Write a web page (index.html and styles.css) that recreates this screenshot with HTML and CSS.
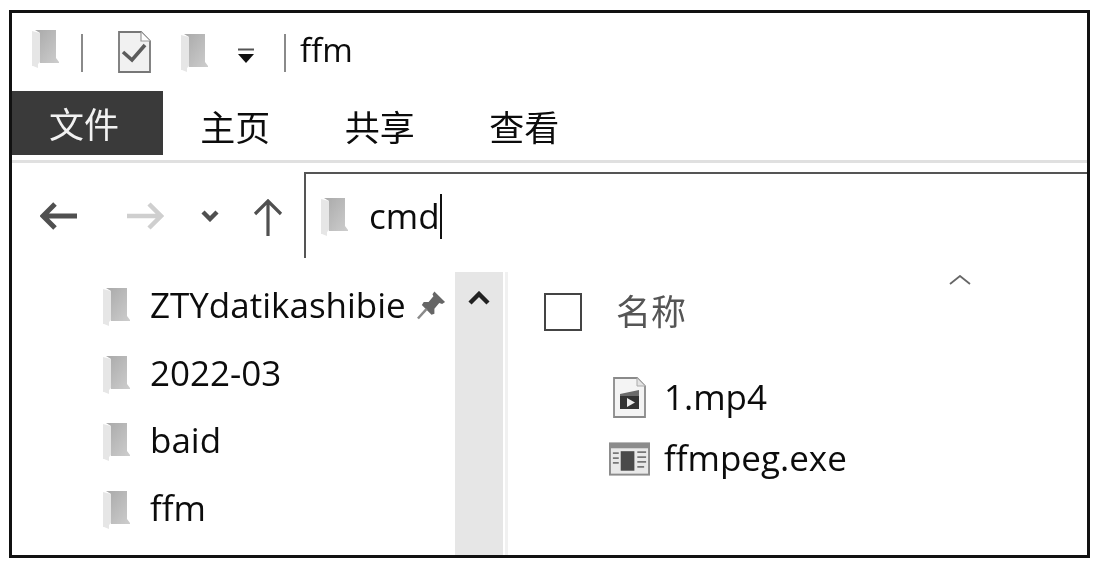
FILE: index.html
```html
<!DOCTYPE html>
<html lang="zh-CN">
<head>
    <meta charset="UTF-8">
    <meta name="viewport" content="width=device-width, initial-scale=1.0">
    <title>ffm</title>
    <link rel="stylesheet" href="styles.css">
</head>
<body>
    <svg class="defs" width="0" height="0">
        <defs>
            <linearGradient id="folderBack" x1="0" y1="0" x2="1" y2="1">
                <stop offset="0" stop-color="#a9a9a9"/>
                <stop offset="1" stop-color="#cdcdcd"/>
            </linearGradient>
            <symbol id="folder" viewBox="0 0 27 39">
                <path d="M3 1H24V29L27 33V34H8V4Z" fill="url(#folderBack)"/>
                <path d="M0 2L8 4V33L6 35V39L1 37H0Z" fill="#e6e6e6"/>
            </symbol>
        </defs>
    </svg>

    <div class="window">
        <!-- Title bar -->
        <div class="titlebar">
            <svg class="qa-folder"><use href="#folder"/></svg>
            <span class="qa-sep first"></span>
            <svg class="qa-check" viewBox="0 0 33 42">
                <path d="M1 1H23L32 10V41H1Z" fill="#f1f1f1" stroke="#777" stroke-width="1.8"/>
                <path d="M23 1V10H32" fill="#fff" stroke="#999" stroke-width="1.2"/>
                <path d="M5 21L14 29L27 14" fill="none" stroke="#5c5c5c" stroke-width="3.6"/>
            </svg>
            <svg class="qa-folder second"><use href="#folder"/></svg>
            <svg class="qa-drop" viewBox="0 0 18 15">
                <path d="M1 1.5H17" stroke="#555" stroke-width="2"/>
                <path d="M1 6H17L9 15Z" fill="#111"/>
            </svg>
            <span class="qa-sep"></span>
            <span class="title-text">ffm</span>
        </div>

        <!-- Ribbon tabs -->
        <div class="tabs">
            <div class="tab tab-file">文件</div>
            <div class="tab">主页</div>
            <div class="tab">共享</div>
            <div class="tab">查看</div>
        </div>
        <div class="ribbon-line"></div>

        <!-- Address row -->
        <div class="address-row">
            <div class="nav-btns">
                <svg class="nav-back" viewBox="0 0 37 28">
                    <path d="M15 2L3 14L15 26M3 14H37" fill="none" stroke="#505050" stroke-width="5"/>
                </svg>
                <svg class="nav-forward" viewBox="0 0 37 28">
                    <path d="M22 2L34 14L22 26M34 14H0" fill="none" stroke="#cfcfcf" stroke-width="4.5"/>
                </svg>
                <svg class="nav-recent" viewBox="0 0 18 12">
                    <path d="M2 2L9 9L16 2" fill="none" stroke="#505050" stroke-width="4.4"/>
                </svg>
                <svg class="nav-up" viewBox="0 0 30 37">
                    <path d="M2 15L15 2L28 15M15 2V37" fill="none" stroke="#505050" stroke-width="3.2"/>
                </svg>
            </div>
            <div class="address-box">
                <svg class="addr-folder"><use href="#folder"/></svg>
                <span class="addr-text">cmd</span>
                <span class="addr-caret"></span>
            </div>
        </div>

        <!-- Nav pane and file list -->
        <div class="content">
            <div class="nav-pane">
                <div class="nav-item">
                    <svg class="nav-folder"><use href="#folder"/></svg>
                    <span>ZTYdatikashibie</span>
                    <svg class="pin" viewBox="0 0 30 30">
                        <path d="M18 1L29 12L26 14L23 13L18 19L18 24L15 25L5 15L7 12L12 12L17 6L16 4Z" fill="#666"/>
                        <path d="M10 19L1 29" stroke="#8a8a8a" stroke-width="2.6"/>
                    </svg>
                </div>
                <div class="nav-item">
                    <svg class="nav-folder"><use href="#folder"/></svg>
                    <span>2022-03</span>
                </div>
                <div class="nav-item">
                    <svg class="nav-folder"><use href="#folder"/></svg>
                    <span>baid</span>
                </div>
                <div class="nav-item">
                    <svg class="nav-folder"><use href="#folder"/></svg>
                    <span>ffm</span>
                </div>
            </div>
            <div class="scrollbar">
                <svg class="scroll-up" viewBox="0 0 22 14">
                    <path d="M2 12L11 3L20 12" fill="none" stroke="#222" stroke-width="4.4"/>
                </svg>
            </div>
            <div class="pane-line"></div>
            <div class="files">
                <div class="files-head">
                    <span class="checkbox"></span>
                    <span class="col-name">名称</span>
                    <svg class="sort-caret" viewBox="0 0 22 10">
                        <path d="M1 9L11 1L21 9" fill="none" stroke="#666" stroke-width="1.8"/>
                    </svg>
                </div>
                <div class="file-row">
                    <span class="file-icon">
                        <svg class="icon-video" viewBox="0 0 33 41">
                            <path d="M1 1H24L32 9V40H1Z" fill="#f4f4f4" stroke="#8a8a8a" stroke-width="1.8"/>
                            <path d="M24 1V9H32" fill="#e4e4e4" stroke="#aaa"/>
                            <path d="M7 17L26 13V19H7Z" fill="#6b6b6b"/>
                            <rect x="7" y="19" width="19" height="13" fill="#333"/>
                            <path d="M14 21L22 25.5L14 30Z" fill="#eee"/>
                        </svg>
                    </span>
                    <span class="file-name">1.mp4</span>
                </div>
                <div class="file-row">
                    <span class="file-icon">
                        <svg class="icon-exe" viewBox="0 0 42 34">
                            <rect width="42" height="34" fill="#8c8c8c"/>
                            <rect x="2" y="6" width="38" height="26" fill="#e9e9e9"/>
                            <rect x="12" y="9" width="14" height="20" fill="#4a4a4a"/>
                            <path d="M4 11H10M4 16H10M4 21H10M29 10H38M29 15H38M29 20H38M29 25H36" stroke="#777" stroke-width="1.8"/>
                        </svg>
                    </span>
                    <span class="file-name">ffmpeg.exe</span>
                </div>
            </div>
        </div>
    </div>
</body>
</html>
```

FILE: styles.css
```css
* {
    box-sizing: border-box;
}

html, body {
    margin: 0;
    padding: 0;
    background: #fff;
    overflow: hidden;
}

.defs {
    display: block;
    height: 0;
}

/* Window frame */
.window {
    width: 1081px;
    height: 548px;
    margin: 10px 0 0 9px;
    border: 3px solid #111;
    background: #fff;
    color: #0c0c0c;
    font-family: "Open Sans", "Noto Sans CJK SC", sans-serif;
    font-size: 35px;
    display: flex;
    flex-direction: column;
    overflow: hidden;
    filter: blur(0.6px);
}

/* Title bar */
.titlebar {
    height: 78px;
    flex: none;
    display: flex;
    align-items: center;
    padding-left: 20px;
}

.qa-folder {
    width: 27px;
    height: 39px;
    margin-top: -7px;
}

.qa-folder.second {
    margin: 0 0 0 30px;
}

.qa-sep {
    width: 2px;
    height: 38px;
    background: #8a8a8a;
    margin-left: 29px;
    margin-top: 2px;
}

.qa-sep.first {
    margin-left: 22px;
}

.qa-check {
    width: 33px;
    height: 42px;
    margin: 0 0 0 35px;
}

.qa-drop {
    width: 18px;
    height: 15px;
    margin: 6px 0 0 29px;
}

.title-text {
    margin-left: 14px;
    margin-top: -5px;
    font-size: 33px;
}

/* Ribbon tabs */
.tabs {
    height: 64px;
    flex: none;
    display: flex;
}

.tab {
    width: 144.5px;
    display: flex;
    align-items: center;
    justify-content: center;
    font-family: "Noto Sans CJK SC", sans-serif;
    font-size: 35px;
    padding-top: 4px;
}

.tab-file {
    width: 151px;
    padding: 0 7px 1px 0;
    background: #3a3a3a;
    color: #f2f2f2;
}

.ribbon-line {
    height: 3px;
    flex: none;
    margin-top: 5px;
    background: #e0e0e0;
}

/* Address row */
.address-row {
    height: 109px;
    flex: none;
    display: flex;
    padding-top: 9px;
}

.nav-btns {
    width: 292px;
    flex: none;
    display: flex;
    align-items: flex-start;
    padding: 30px 0 0 28px;
}

.nav-back,
.nav-forward {
    width: 37px;
    height: 28px;
}

.nav-forward {
    margin-left: 50px;
}

.nav-recent {
    width: 18px;
    height: 12px;
    margin: 8px 0 0 37px;
}

.nav-up {
    width: 30px;
    height: 37px;
    margin: -3px 0 0 34px;
}

.address-box {
    flex: 1;
    height: 86px;
    border-top: 2px solid #555;
    border-left: 2px solid #555;
    display: flex;
    align-items: center;
    padding-left: 15px;
}

.addr-folder {
    width: 27px;
    height: 39px;
}

.addr-text {
    margin-left: 21px;
    margin-top: -2px;
}

.addr-caret {
    width: 2px;
    height: 45px;
    background: #111;
}

/* Nav pane and file list */
.content {
    flex: 1;
    min-height: 0;
    display: flex;
}

.nav-pane {
    width: 443px;
    flex: none;
    padding: 1px 0 0 91px;
}

.nav-item {
    height: 67.5px;
    display: flex;
    align-items: center;
}

.nav-item span {
    margin: -4px 0 0 20px;
}

.nav-folder {
    width: 27px;
    height: 39px;
    flex: none;
}

.pin {
    width: 29px;
    height: 30px;
    margin: -4px 0 0 11px;
    flex: none;
}

.scrollbar {
    width: 48px;
    flex: none;
    background: #e6e6e6;
    display: flex;
    justify-content: center;
    align-items: flex-start;
    padding-top: 19px;
}

.scroll-up {
    width: 22px;
    height: 14px;
}

.pane-line {
    width: 3px;
    flex: none;
    margin-left: 2px;
    background: #f1f1f1;
}

.files {
    flex: 1;
    padding-left: 36px;
}

.files-head {
    height: 95px;
    display: flex;
    align-items: flex-start;
}

.checkbox {
    width: 38px;
    height: 38px;
    margin-top: 21px;
    border: 2px solid #444;
}

.col-name {
    margin: 13px 0 0 34px;
    font-family: "Noto Sans CJK SC", sans-serif;
    font-size: 35px;
    line-height: 50px;
    color: #555;
}

.sort-caret {
    width: 22px;
    height: 10px;
    margin: 3px 0 0 263px;
}

.file-row {
    height: 61px;
    display: flex;
    align-items: center;
    padding-left: 64px;
}

.file-icon {
    width: 42px;
    display: flex;
    justify-content: center;
    margin-right: 14px;
}

.file-name {
    margin-top: -3px;
}

.icon-video {
    width: 33px;
    height: 41px;
}

.icon-exe {
    width: 42px;
    height: 34px;
    margin-left: 1px;
}
```
